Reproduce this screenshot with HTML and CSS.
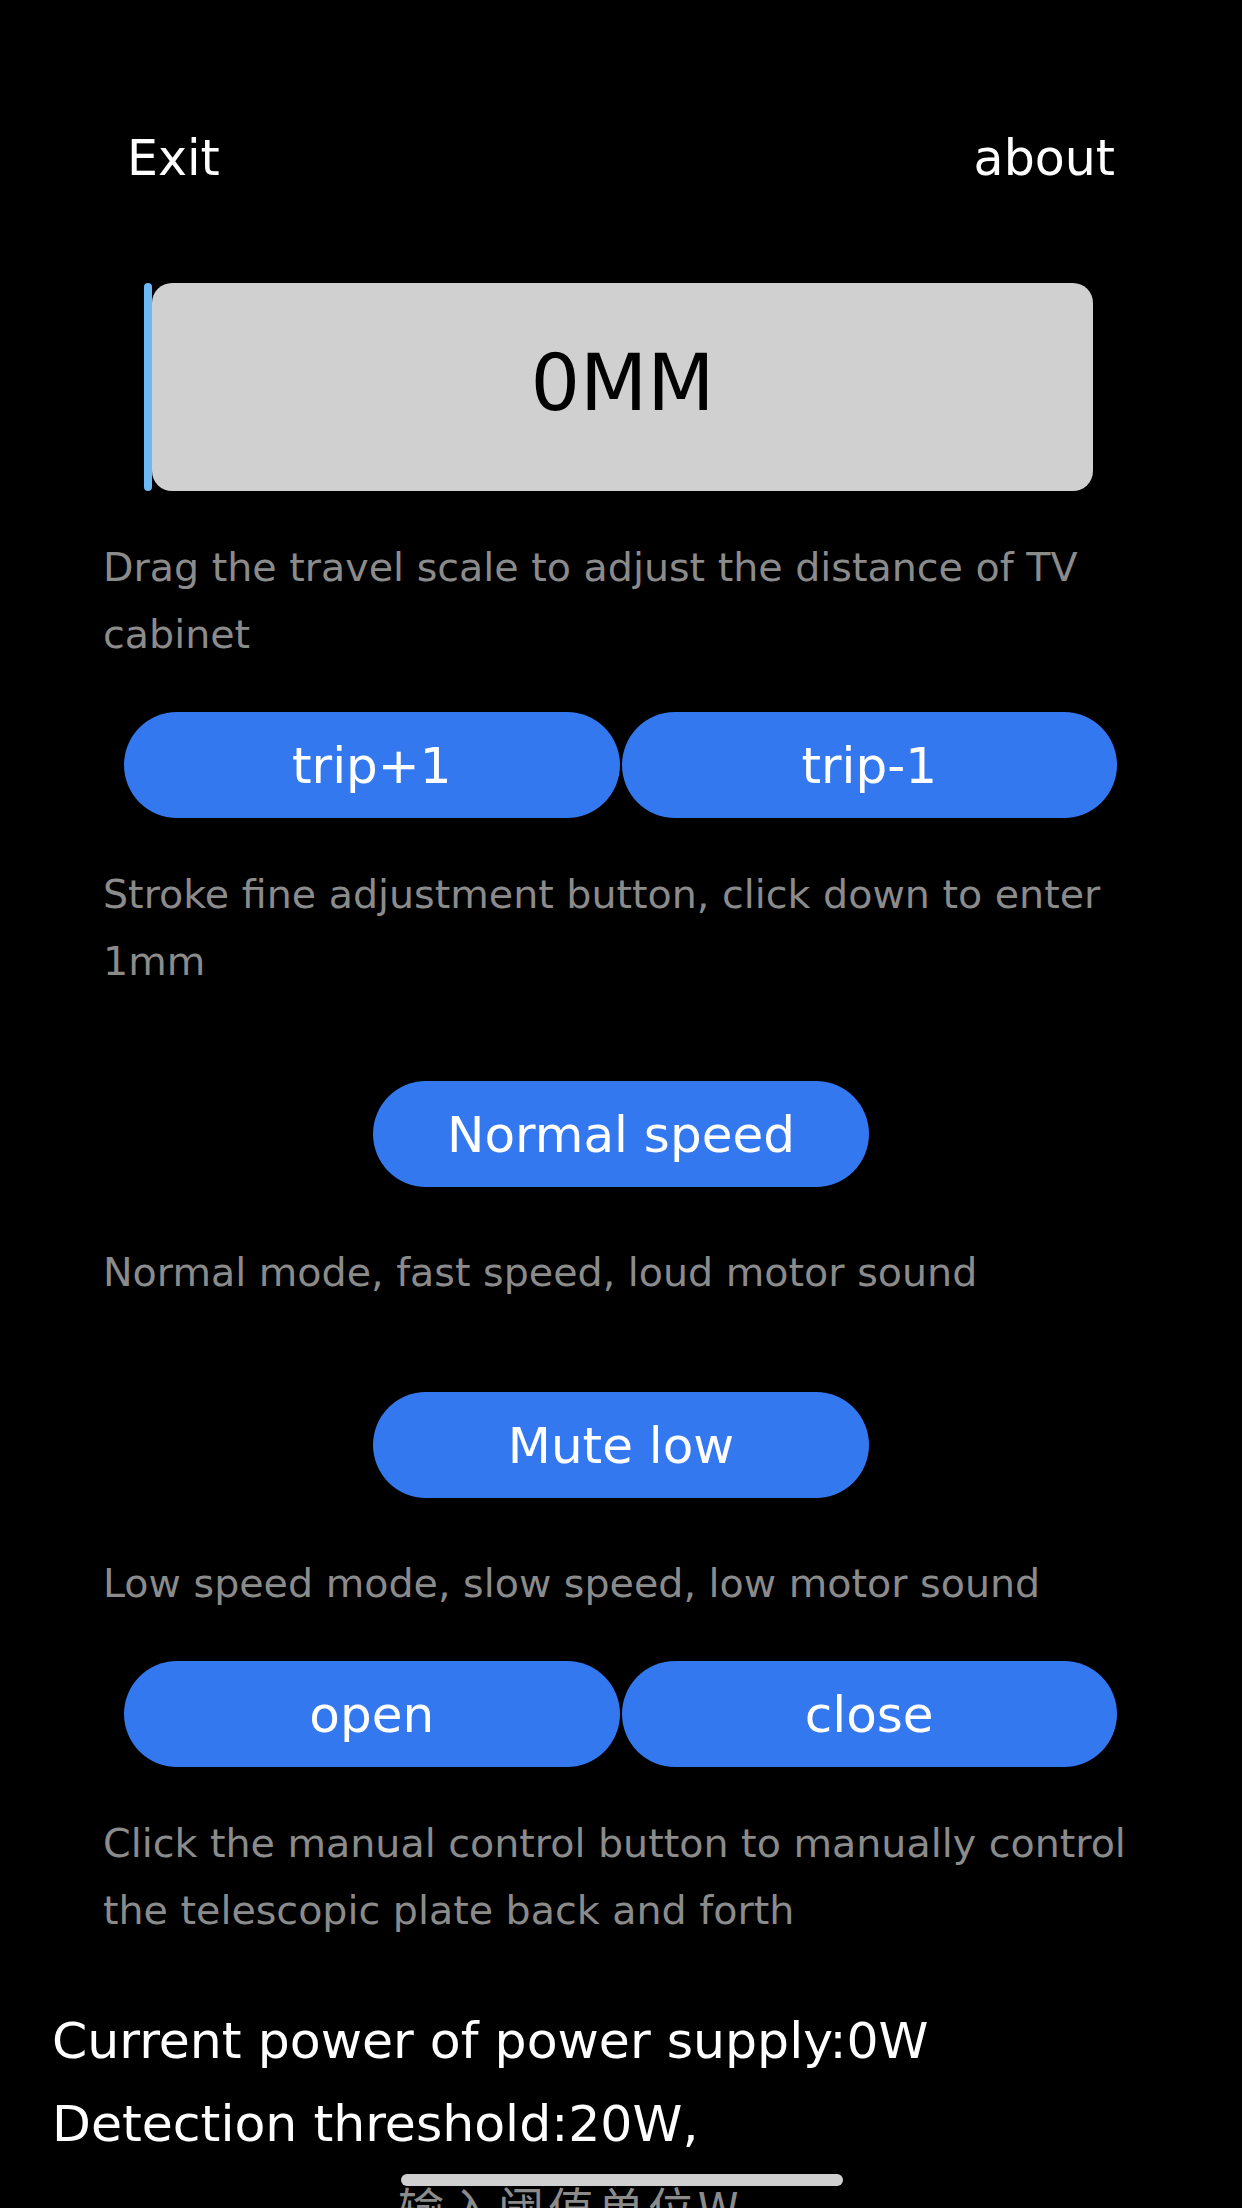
FILE: index.html
```html
<!DOCTYPE html>
<html lang="en">
<head>
  <meta charset="UTF-8">
  <meta name="viewport" content="width=device-width, initial-scale=1.0">
  <title>TV Cabinet Control</title>
  <link rel="stylesheet" href="styles.css">
</head>
<body>

  <div class="top-bar">
    <span class="top-link">Exit</span>
    <span class="top-link">about</span>
  </div>

  <div class="scale">
    <div class="scale-thumb"></div>
    <div class="scale-box" id="distance">0MM</div>
  </div>

  <p class="hint hint-first">Drag the travel scale to adjust the distance of TV cabinet</p>

  <div class="button-pair">
    <button class="pill">trip+1</button>
    <button class="pill">trip-1</button>
  </div>

  <p class="hint">Stroke fine adjustment button, click down to enter 1mm</p>

  <div class="button-single speed-normal">
    <button class="pill">Normal speed</button>
  </div>

  <p class="hint hint-wide">Normal mode, fast speed, loud motor sound</p>

  <div class="button-single speed-mute">
    <button class="pill">Mute low</button>
  </div>

  <p class="hint hint-wide">Low speed mode, slow speed, low motor sound</p>

  <div class="button-pair">
    <button class="pill">open</button>
    <button class="pill">close</button>
  </div>

  <p class="hint">Click the manual control button to manually control the telescopic plate back and forth</p>

  <div class="power">
    <div class="power-line">Current power of power supply:0W</div>
    <div class="power-line">Detection threshold:20W,</div>
    <div class="power-input">输入阈值单位W</div>
  </div>

  <div class="home-indicator"></div>

</body>
</html>
```

FILE: styles.css
```css
html, body {
  height: 2208px;
  overflow: hidden;
}

body {
  margin: 0;
  background: #000;
  color: #fff;
  font-family: 'DejaVu Sans', 'Liberation Sans', sans-serif;
  position: relative;
}

.top-bar {
  display: flex;
  justify-content: space-between;
  padding: 129px 127px 0 127px;
  height: 60px;
  line-height: 60px;
}

.top-link {
  font-size: 49px;
  color: #fff;
}

/* travel scale: thin thumb on the left, grey readout */
.scale {
  display: flex;
  margin: 94px 0 0 144px;
  width: 949px;
  height: 208px;
}

.scale-thumb {
  width: 8px;
  background-color: #6cb9f6;
  border-radius: 4px;
}

.scale-box {
  flex: 1;
  background-color: #d0d0d0;
  border-radius: 20px;
  display: flex;
  justify-content: center;
  align-items: center;
  color: #000;
  font-size: 78px;
  padding-bottom: 8px;
}

.hint {
  margin: 43px 0 0 103px;
  width: 1040px;
  color: #8b8b8b;
  font-size: 39.6px;
  line-height: 67px;
}

.hint-wide {
  margin-top: 52px;
}

.button-pair {
  display: flex;
  gap: 2px;
  margin: 44px 0 0 124px;
  width: 993px;
}

.button-pair .pill {
  flex: 1;
}

.button-single {
  display: flex;
  justify-content: center;
  margin-top: 86px;
}

.button-single .pill {
  width: 496px;
}

.pill {
  height: 106px;
  border: none;
  border-radius: 53px;
  background-color: #3478f0;
  color: #fff;
  font-family: 'DejaVu Sans', 'Liberation Sans', sans-serif;
  font-size: 50px;
  padding: 2px 0 0 0;
}

.power {
  margin: 55px 0 0 52px;
  font-size: 50.5px;
  line-height: 83px;
}

.power-input {
  margin-left: 346px;
  color: #8b8b8b;
  font-family: 'Noto Sans CJK SC', 'DejaVu Sans', sans-serif;
  font-size: 46px;
  letter-spacing: 4px;
}

/* system home bar over the content */
.home-indicator {
  position: absolute;
  top: 2174px;
  left: 401px;
  width: 442px;
  height: 12px;
  border-radius: 6px;
  background-color: #d0d0d0;
}
```
